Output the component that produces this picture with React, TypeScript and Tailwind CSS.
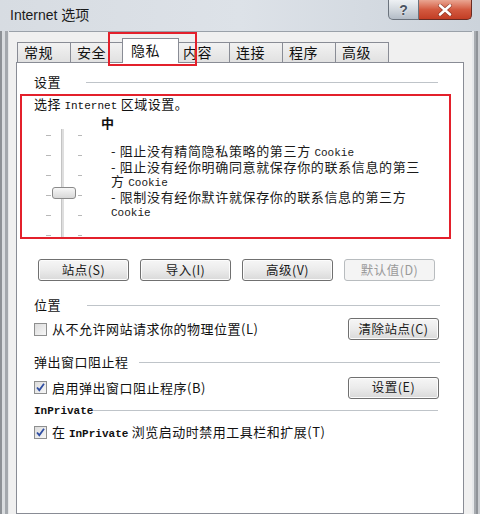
import React from "react";

const tabs = ["常规", "安全", "隐私", "内容", "连接", "程序", "高级"];

const Btn = ({ label, disabled }: { label: string; disabled?: boolean }) => (
  <div
    className={`w-[91px] h-[22px] rounded-[3px] border flex items-center justify-center text-[12.5px] ${
      disabled
        ? "border-[#b8bcbf] bg-[#f4f4f4] text-[#9a9a9a]"
        : "border-[#707070] bg-gradient-to-b from-[#f6f6f6] via-[#ebebeb] to-[#d9d9d9] text-[#1a1a1a] shadow-[inset_0_0_0_1px_#fcfcfc]"
    }`}
  >
    {label}
  </div>
);

const Check = ({ checked }: { checked?: boolean }) => (
  <div className="w-[13px] h-[13px] border border-[#8e8f8f] bg-gradient-to-br from-[#dcdcdc] to-[#f7f7f7] flex items-center justify-center shrink-0">
    {checked && (
      <svg width="11" height="11" viewBox="0 0 11 11">
        <path d="M2 5.5 L4.3 8.2 L9 1.8" fill="none" stroke="#2f4ea3" strokeWidth="1.8" />
      </svg>
    )}
  </div>
);

const Header = ({ children, gap, right = 23 }: { children: React.ReactNode; gap: number; right?: number }) => (
  <div className="flex items-center h-[14px] pl-[17px]" style={{ paddingRight: right }}>
    <span className="leading-[14px] whitespace-nowrap">{children}</span>
    <div className="flex-1 h-px bg-[#bfc4c9]" style={{ marginLeft: gap }} />
  </div>
);

const Mono = ({ children, bold }: { children: React.ReactNode; bold?: boolean }) => (
  <span className={`font-['Liberation_Mono',monospace] text-[11px] tracking-normal ${bold ? "font-bold" : ""}`}>{children}</span>
);

const ticks = [0, 1, 2, 3, 4, 5];

export default function App() {
  return (
    <div className="w-[480px] h-[514px] overflow-hidden flex flex-col bg-gradient-to-b from-[#dfe3e8] to-[#cbd2da] font-['Noto_Sans_CJK_SC',sans-serif] text-[13px] text-[#111]">
      {/* Title bar */}
      <div className="h-[31px] flex items-start shrink-0 bg-gradient-to-r from-[#d7dce2] via-[#dde2e8] to-[#ccd3db]">
        <span className="pl-[10px] pt-[6px] text-[14px] leading-[18px] font-['Liberation_Sans','Noto_Sans_CJK_SC',sans-serif] text-[#1b1b1b]">
          Internet 选项
        </span>
        <div className="ml-auto mr-[8px] flex">
          <div className="w-[31px] h-[20px] rounded-bl-[5px] border border-t-0 border-[#6b737d] bg-gradient-to-b from-[#eef1f4] via-[#d2d8de] to-[#b3bcc6] flex items-center justify-center">
            <span className="font-['Liberation_Sans',sans-serif] font-bold text-[14px] leading-none text-[#4a5461] [text-shadow:0_0_2px_#fff]">?</span>
          </div>
          <div className="w-[53px] h-[20px] rounded-br-[5px] border border-t-0 border-l-0 border-[#6a2b22] bg-gradient-to-b from-[#e9a592] via-[#d35a40] to-[#c23d24] flex items-center justify-center">
            <svg width="16" height="12" viewBox="0 0 16 12">
              <path d="M3 1.5 L13 10.5 M13 1.5 L3 10.5" stroke="#5a1a10" strokeWidth="4" strokeLinecap="round" opacity="0.5" />
              <path d="M3 1.5 L13 10.5 M13 1.5 L3 10.5" stroke="#ffffff" strokeWidth="2.6" strokeLinecap="round" />
            </svg>
          </div>
        </div>
      </div>

      {/* Body */}
      <div className="flex-1 flex min-h-0">
        <div className="w-[9px] flex shrink-0">
          <div className="w-[2px] bg-[#8d9196]" />
          <div className="w-[3px] bg-[#d9dcdf]" />
          <div className="w-[3px] bg-[#a4a8ad]" />
          <div className="w-[1px] bg-[#e4e6e8]" />
        </div>

        <div className="flex-1 flex flex-col bg-[#f0f0f0] border-t border-[#9aa1a9] pt-[6px] pl-[7px] pr-[8px] min-w-0 tracking-[0.5px]">
          {/* Tabs */}
          <div className="relative flex items-end h-[24px] pl-[1px] shrink-0">
            {tabs.map((t) =>
              t === "隐私" ? (
                <div
                  key={t}
                  className="relative z-10 w-[57px] h-[25px] -mx-[2px] -mb-px border border-b-0 border-[#898c95] bg-white pl-[8px] pt-[2px] leading-[18px] text-[14px]"
                >
                  {t}
                </div>
              ) : (
                <div
                  key={t}
                  className="w-[54px] h-[20px] -ml-px first:ml-0 border border-b-0 border-[#898c95] bg-gradient-to-b from-[#f2f2f2] to-[#e1e1e1] pl-[6px] leading-[19px] text-[14px]"
                >
                  {t}
                </div>
              )
            )}
            {/* highlight around the selected tab */}
            <div className="absolute z-20 left-[92px] -top-[6px] w-[89px] h-[34px] border-2 border-[#e3202b]" />
          </div>

          {/* Panel */}
          <div className="flex-1 border border-[#898c95] bg-white flex flex-col pt-[12px]">
            <Header gap={25} right={25}>设置</Header>

            <div className="mt-[5px] ml-[3px] mr-[12px] h-[145px] border-2 border-[#e3202b] overflow-hidden flex flex-col shrink-0">
              <div className="pl-[12px] h-[16px] leading-[16px] whitespace-nowrap">
                选择 <Mono>Internet</Mono> 区域设置。
              </div>
              <div className="flex">
                <div className="relative ml-[24px] mt-[17px] w-[36px] h-[110px] flex shrink-0">
                  <div className="flex flex-col gap-[19px] pt-[6px]">
                    {ticks.map((i) => (
                      <div key={i} className="w-[5px] h-px bg-[#b8b8b8]" />
                    ))}
                  </div>
                  <div className="ml-[10px] w-[3px] h-full bg-[#dedede] border-l border-[#c4c4c4]" />
                  <div className="ml-[14px] flex flex-col gap-[19px] pt-[6px]">
                    {ticks.map((i) => (
                      <div key={i} className="w-[4px] h-px bg-[#b8b8b8]" />
                    ))}
                  </div>
                  <div className="absolute left-[6px] top-[58px] w-[24px] h-[12px] rounded-[3px] border border-[#8a8a8a] bg-gradient-to-b from-[#f7f7f7] to-[#d8d8d8]" />
                </div>
                <div className="ml-[19px] flex flex-col">
                  <div className="mt-[4px] leading-[14px] font-bold">中</div>
                  <div className="mt-[14px] pl-[10px] leading-[14px] whitespace-nowrap text-[#1a1a1a] tracking-[0.65px]">
                    <div>
                      - 阻止没有精简隐私策略的第三方 <Mono>Cookie</Mono>
                    </div>
                    <div>- 阻止没有经你明确同意就保存你的联系信息的第三</div>
                    <div>
                      方 <Mono>Cookie</Mono>
                    </div>
                    <div>- 限制没有经你默许就保存你的联系信息的第三方</div>
                    <div>
                      <Mono>Cookie</Mono>
                    </div>
                  </div>
                </div>
              </div>
            </div>

            <div className="mt-[20px] pl-[21px] flex gap-[11px]">
              <Btn label="站点(S)" />
              <Btn label="导入(I)" />
              <Btn label="高级(V)" />
              <Btn label="默认值(D)" disabled />
            </div>

            <div className="mt-[17px]">
              <Header gap={26}>位置</Header>
            </div>
            <div className="mt-[6px] h-[22px] pl-[17px] pr-[24px] flex items-center">
              <Check />
              <span className="ml-[5px] whitespace-nowrap">从不允许网站请求你的物理位置(L)</span>
              <div className="ml-auto">
                <Btn label="清除站点(C)" />
              </div>
            </div>

            <div className="mt-[15px]">
              <Header gap={10}>弹出窗口阻止程</Header>
            </div>
            <div className="mt-[8px] h-[21px] pl-[17px] pr-[24px] flex items-center">
              <Check checked />
              <span className="ml-[5px] whitespace-nowrap">启用弹出窗口阻止程序(B)</span>
              <div className="ml-auto">
                <Btn label="设置(E)" />
              </div>
            </div>

            <div className="mt-[5px]">
              <Header gap={0} right={25}>
                <Mono bold>InPrivate</Mono>
              </Header>
            </div>
            <div className="mt-[7px] h-[16px] pl-[17px] flex items-center">
              <Check checked />
              <span className="ml-[5px] whitespace-nowrap">
                在 <Mono bold>InPrivate</Mono> 浏览启动时禁用工具栏和扩展(T)
              </span>
            </div>
          </div>
        </div>

        <div className="w-[8px] flex shrink-0">
          <div className="w-[2px] bg-[#e6e8ea]" />
          <div className="w-[2px] bg-[#a7abb0]" />
          <div className="w-[2px] bg-[#8f9398]" />
          <div className="w-[2px] bg-[#c9ccd0]" />
        </div>
      </div>
    </div>
  );
}
